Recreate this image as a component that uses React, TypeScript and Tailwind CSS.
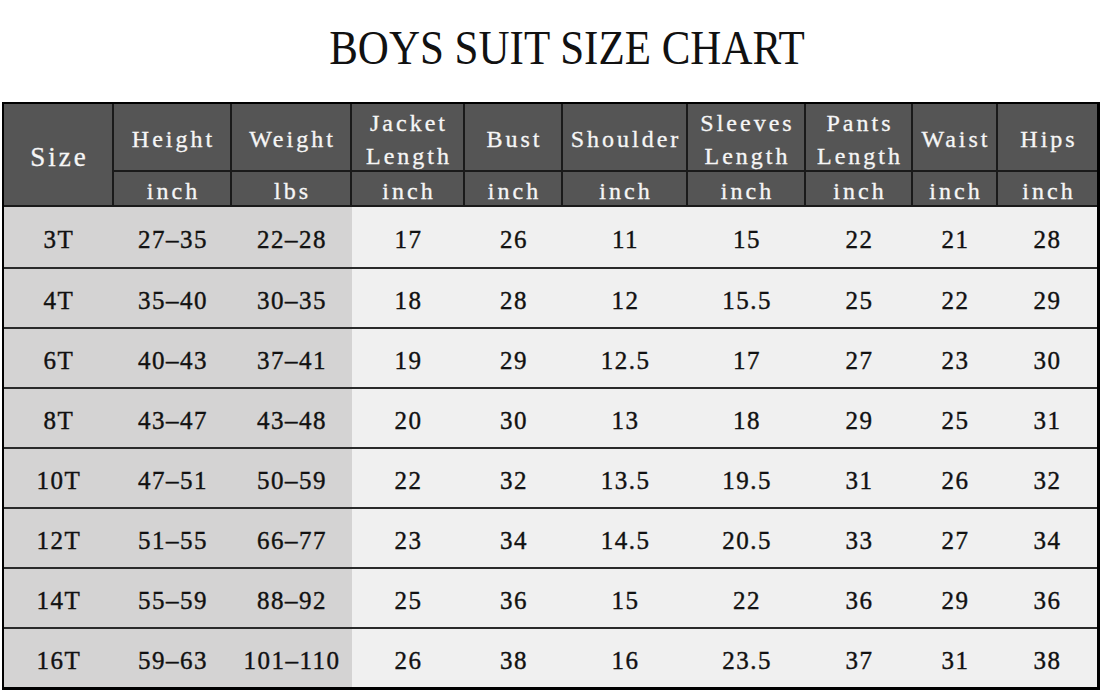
const cols = ['w-[110px]', 'w-[118px]', 'w-[120px]', 'w-[113px]', 'w-[98px]', 'w-[125px]', 'w-[118px]', 'w-[107px]', 'w-[85px]', 'w-[99px]'];

const heads: { top: string[]; unit: string }[] = [
  { top: ['Height'], unit: 'inch' },
  { top: ['Weight'], unit: 'lbs' },
  { top: ['Jacket', 'Length'], unit: 'inch' },
  { top: ['Bust'], unit: 'inch' },
  { top: ['Shoulder'], unit: 'inch' },
  { top: ['Sleeves', 'Length'], unit: 'inch' },
  { top: ['Pants', 'Length'], unit: 'inch' },
  { top: ['Waist'], unit: 'inch' },
  { top: ['Hips'], unit: 'inch' },
];

const rows = [
  ['3T', '27–35', '22–28', '17', '26', '11', '15', '22', '21', '28'],
  ['4T', '35–40', '30–35', '18', '28', '12', '15.5', '25', '22', '29'],
  ['6T', '40–43', '37–41', '19', '29', '12.5', '17', '27', '23', '30'],
  ['8T', '43–47', '43–48', '20', '30', '13', '18', '29', '25', '31'],
  ['10T', '47–51', '50–59', '22', '32', '13.5', '19.5', '31', '26', '32'],
  ['12T', '51–55', '66–77', '23', '34', '14.5', '20.5', '33', '27', '34'],
  ['14T', '55–59', '88–92', '25', '36', '15', '22', '36', '29', '36'],
  ['16T', '59–63', '101–110', '26', '38', '16', '23.5', '37', '31', '38'],
];

export default function App() {
  return (
    <div className="w-[1100px] h-[691px] bg-white overflow-hidden">
      <div className="h-[102px] pt-[26px] pl-[34px] flex justify-center">
        <h1 className="text-[43px] leading-[48px] text-[#111] font-['Liberation_Serif',serif] scale-y-[1.12]">
          BOYS SUIT SIZE CHART
        </h1>
      </div>

      <div className="ml-[2px] w-[1098px] border-t-2 border-l-2 border-r-[3px] border-b-[3px] border-black">
        {/* header */}
        <div className="flex bg-[#555] text-[#f6f6f6] font-['Liberation_Serif',serif] text-[24px] tracking-[3px] [-webkit-text-stroke:0.3px_#f6f6f6]">
          <div className={`${cols[0]} h-[103px] pt-[6px] pl-[3px] flex items-center justify-center text-[27px] border-r-2 border-b-2 border-[#1a1a1a]`}>
            Size
          </div>
          {heads.map((h, i) => (
            <div key={i} className={`${cols[i + 1]} flex flex-col ${i < heads.length - 1 ? 'border-r-2' : ''} border-[#1a1a1a]`}>
              <div className="h-[68px] pt-[5px] pl-[3px] flex flex-col items-center justify-center leading-[33px] border-b-2 border-[#1a1a1a]">
                {h.top.map((t) => (
                  <span key={t}>{t}</span>
                ))}
              </div>
              <div className="h-[35px] pt-[4px] pl-[3px] flex items-center justify-center border-b-2 border-[#1a1a1a]">
                {h.unit}
              </div>
            </div>
          ))}
        </div>

        {/* data */}
        {rows.map((r, ri) => (
          <div key={ri} className={`flex h-[60px] ${ri > 0 ? 'border-t-2 border-[#2a2a2a]' : ''} font-['Liberation_Serif',serif] text-[25px] tracking-[1.5px] text-[#111] [-webkit-text-stroke:0.4px_#111]`}>
            {r.map((v, ci) => (
              <div key={ci} className={`${cols[ci]} pt-[5px] flex items-center justify-center ${ci < 3 ? 'bg-[#d4d3d3]' : 'bg-[#f0f0f0]'}`}>
                {v}
              </div>
            ))}
          </div>
        ))}
      </div>
    </div>
  );
}
